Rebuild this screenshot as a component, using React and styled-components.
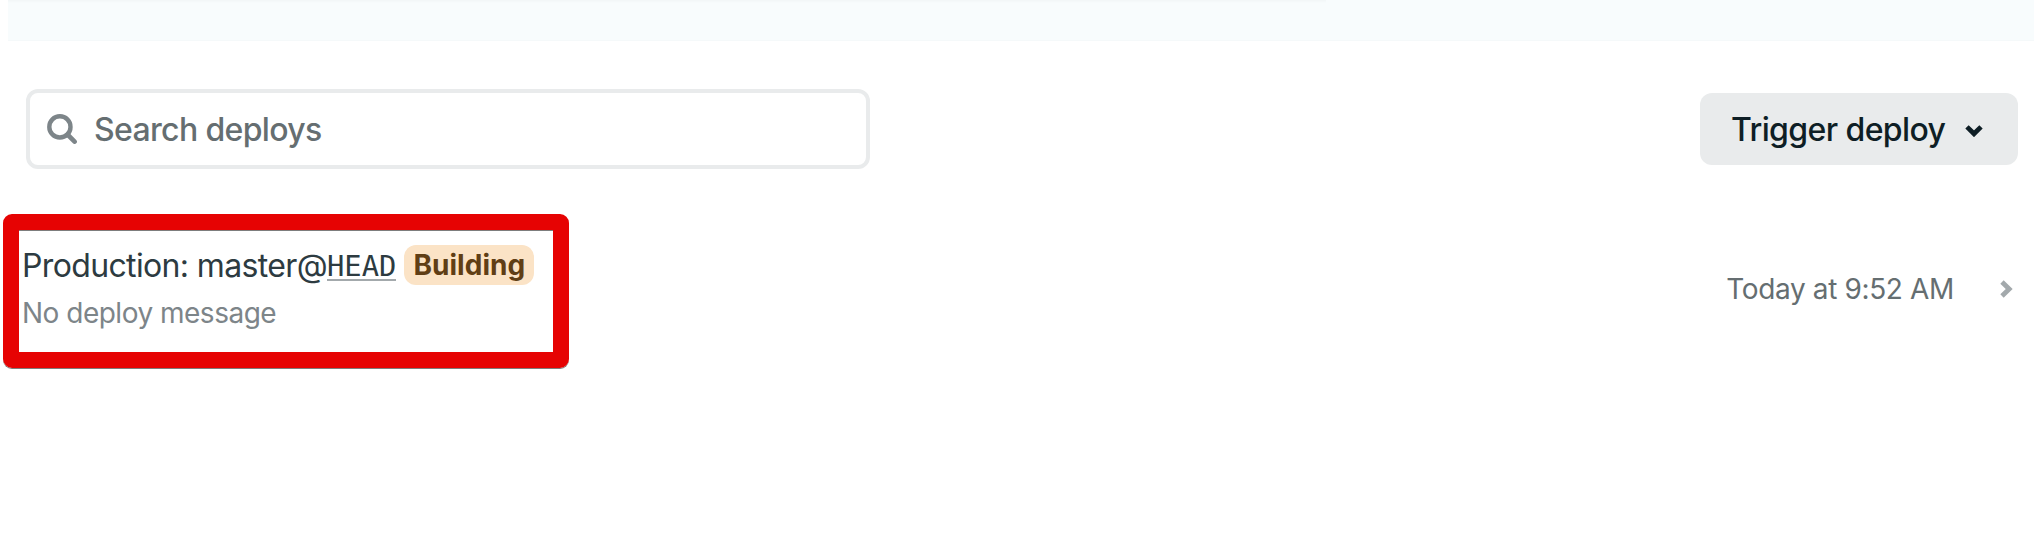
import React from "react";
import styled, { createGlobalStyle } from "styled-components";

const GlobalStyle = createGlobalStyle`
  *, *::before, *::after { box-sizing: border-box; }
  body {
    margin: 0;
    background: #fff;
    font-family: Inter, "Liberation Sans", sans-serif;
    overflow: hidden;
  }
`;

const Page = styled.main`
  height: 534px;
  display: flex;
  flex-direction: column;
`;

const Banner = styled.div`
  height: 41px;
  margin-left: 8px;
  flex: none;
  background:
    linear-gradient(#f2f6f7, #f8fcfd) 0 0 / 1318px 3px no-repeat,
    linear-gradient(#f5f9fa, #f5f9fa) 0 100% / 100% 1px no-repeat,
    #f8fcfd;
`;

const Toolbar = styled.div`
  display: flex;
  justify-content: space-between;
  align-items: center;
  padding: 48px 16px 0 26px;
`;

const SearchField = styled.label`
  display: flex;
  align-items: center;
  width: 844px;
  height: 80px;
  padding: 0 17px;
  border: 4px solid #e9ebec;
  border-radius: 12px;
  color: #7d8589;
`;

const SearchInput = styled.input`
  flex: 1;
  min-width: 0;
  height: 50px;
  margin-left: 16px;
  padding: 1px 0 0 1px;
  border: 0;
  outline: 0;
  background: none;
  font: 500 32px/48px Inter, sans-serif;
  letter-spacing: -0.65px;
  &::placeholder { color: #656e71; opacity: 1; }
`;

const Button = styled.button`
  display: flex;
  align-items: center;
  justify-content: space-between;
  width: 318px;
  height: 72px;
  padding: 0 34px 0 31px;
  border: 0;
  border-radius: 12px;
  background: #e9ebec;
  color: #0e1e25;
  font: 500 32px/48px Inter, sans-serif;
  letter-spacing: -0.6px;
  white-space: nowrap;
`;

const ButtonLabel = styled.span`
  padding-top: 2px;
`;

const DeployRow = styled.div`
  display: flex;
  justify-content: space-between;
  padding: 45px 16px 0 3px;
`;

const Highlight = styled.div`
  width: 566px;
  height: 154px;
  padding: 15px 0 0 3px;
  border: 16px solid #e60303;
  border-radius: 9px;
  box-shadow: 0 1px 0 #7d7d7d, inset 0 1px 0 #7d7d7d;
`;

const Title = styled.div`
  display: flex;
  align-items: center;
  height: 40px;
  color: #2d3b41;
  font-size: 32px;
  line-height: 40px;
  letter-spacing: -0.64px;
  white-space: nowrap;
`;

const Branch = styled.span`
  padding-top: 2px;
`;

const Commit = styled.a`
  height: 34px;
  margin-bottom: 2px;
  font-family: "DejaVu Sans Mono", monospace;
  font-size: 28.8px;
  line-height: 38px;
  letter-spacing: 0;
  border-bottom: 2px solid #a3a9ac;
`;

const Badge = styled.span`
  width: 130px;
  height: 40px;
  margin-left: 8px;
  border-radius: 12px;
  background: #fbe3c6;
  color: #603e15;
  font-size: 28px;
  font-weight: 700;
  letter-spacing: 0.05px;
  text-align: center;
`;

const Message = styled.div`
  margin-top: 8px;
  color: #7d8589;
  font-size: 28px;
  line-height: 40px;
  letter-spacing: -0.5px;
  white-space: nowrap;
`;

const Meta = styled.div`
  display: flex;
  align-items: center;
  height: 40px;
  margin-top: 55px;
  padding-right: 5px;
  color: #656e71;
  font-size: 28px;
  line-height: 40px;
  letter-spacing: -0.36px;
  white-space: nowrap;
`;

const RowArrow = styled.svg`
  margin-left: 46px;
`;

export default function App() {
  return (
    <>
      <GlobalStyle />
      <Page>
        <Banner />
        <Toolbar>
          <SearchField>
            <svg width="30" height="30" viewBox="0 0 30 30" fill="none" stroke="currentColor">
              <circle cx="12.9" cy="12.9" r="10.6" strokeWidth="4.4" />
              <path d="M20.5 20.5 L27.6 27.6" strokeWidth="4.6" strokeLinecap="round" />
            </svg>
            <SearchInput placeholder="Search deploys" />
          </SearchField>
          <Button>
            <ButtonLabel>Trigger deploy</ButtonLabel>
            <svg width="20" height="16" viewBox="0 0 20 16">
              <path d="M3 5.9 L10 12.8 L17 5.9" fill="none" stroke="currentColor" strokeWidth="4.8" />
            </svg>
          </Button>
        </Toolbar>
        <DeployRow>
          <Highlight>
            <Title>
              <Branch>Production: master@</Branch>
              <Commit>HEAD</Commit>
              <Badge>Building</Badge>
            </Title>
            <Message>No deploy message</Message>
          </Highlight>
          <Meta>
            <span>Today at 9:52 AM</span>
            <RowArrow width="13" height="20" viewBox="0 0 13 20">
              <path d="M2 3 L9.2 10 L2 17" fill="none" stroke="#a3a9ac" strokeWidth="4.8" />
            </RowArrow>
          </Meta>
        </DeployRow>
      </Page>
    </>
  );
}
